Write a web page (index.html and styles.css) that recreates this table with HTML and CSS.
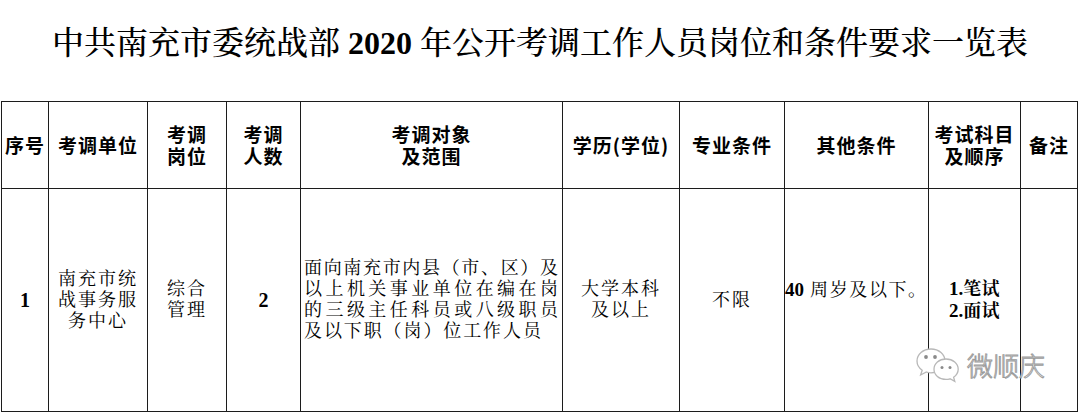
FILE: index.html
```html
<!DOCTYPE html>
<html lang="zh-CN">
<head>
<meta charset="utf-8">
<title>中共南充市委统战部2020年公开考调工作人员岗位和条件要求一览表</title>
<link rel="stylesheet" href="styles.css">
</head>
<body>
<h1 class="title">中共南充市委统战部 <span class="title-num">2020</span> 年公开考调工作人员岗位和条件要求一览表</h1>
<table class="grid">
  <colgroup>
    <col class="c-no"><col class="c-unit"><col class="c-post"><col class="c-count"><col class="c-scope">
    <col class="c-edu"><col class="c-major"><col class="c-other"><col class="c-exam"><col class="c-note">
  </colgroup>
  <thead>
    <tr class="head-row">
      <th>序号</th>
      <th>考调单位</th>
      <th>考调<br>岗位</th>
      <th>考调<br>人数</th>
      <th>考调对象<br>及范围</th>
      <th>学历(学位)</th>
      <th>专业条件</th>
      <th>其他条件</th>
      <th>考试科目<br>及顺序</th>
      <th>备注</th>
    </tr>
  </thead>
  <tbody>
    <tr class="body-row">
      <td class="num">1</td>
      <td>南充市统<br>战事务服<br>务中心</td>
      <td>综合<br>管理</td>
      <td class="num">2</td>
      <td class="scope">
        <span class="jl">面向南充市内县（市、区）及</span>
        <span class="jl">以上机关事业单位在编在岗</span>
        <span class="jl">的三级主任科员或八级职员</span>
        <span class="ll">及以下职（岗）位工作人员</span>
      </td>
      <td>大学本科<br>及以上</td>
      <td>不限</td>
      <td class="other"><b class="digits">40</b> 周岁及以下。</td>
      <td class="exam"><b class="digits">1.</b>笔试<br><b class="digits">2.</b>面试</td>
      <td></td>
    </tr>
  </tbody>
</table>
<svg class="wm-icon" width="46" height="40" viewBox="0 0 46 40" aria-hidden="true">
  <path d="M16 3 C8 3 2 8.5 2 15 C2 18.8 4 22 7.2 24.2 L5.6 29 L11.4 26 C12.9 26.5 14.4 26.8 16 26.8 C24 26.8 30 21.5 30 15 C30 8.5 24 3 16 3 Z" fill="#fff" stroke="#b8b8b8" stroke-width="1.3"/>
  <circle cx="11" cy="11" r="1.9" fill="#8a8a8a"/>
  <circle cx="20" cy="11" r="1.9" fill="#8a8a8a"/>
  <path d="M31 13 C24 13 19 17.6 19 23.2 C19 28.8 24 33.4 31 33.4 C32.4 33.4 33.7 33.2 35 32.8 L39.8 35.4 L38.6 31.2 C41.5 29.2 43.2 26.3 43.2 23.2 C43.2 17.6 38 13 31 13 Z" fill="#fff" stroke="#b8b8b8" stroke-width="1.3"/>
  <circle cx="27" cy="21.5" r="1.5" fill="#8a8a8a"/>
  <circle cx="35" cy="21.5" r="1.5" fill="#8a8a8a"/>
</svg>
<div class="wm-text">微顺庆</div>
</body>
</html>
```
FILE: styles.css
```css
html, body {
  margin: 0;
  padding: 0;
  background: #fff;
}
body {
  width: 1080px;
  height: 414px;
  overflow: hidden;
  position: relative;
  color: #000;
  font-family: "Liberation Serif", "Noto Serif CJK SC", "Noto Sans CJK SC", serif;
}
.title {
  margin: 0;
  height: 101px;
  line-height: 86px;
  text-align: center;
  font-size: 32px;
  font-weight: 500;
  white-space: nowrap;
}
.title-num {
  font-weight: 700;
}
.grid {
  margin-left: 1px;
  width: 1076px;
  border-collapse: collapse;
  table-layout: fixed;
}
.c-no { width: 47px; }
.c-unit { width: 99px; }
.c-post { width: 79px; }
.c-count { width: 74px; }
.c-scope { width: 262px; }
.c-edu { width: 117px; }
.c-major { width: 105px; }
.c-other { width: 144px; }
.c-exam { width: 92px; }
.c-note { width: 57px; }
.grid th,
.grid td {
  border: 1px solid #1c1c1c;
  padding: 0;
  text-align: center;
  vertical-align: middle;
}
.head-row {
  height: 87px;
}
.grid th {
  font-family: "Noto Sans CJK SC", sans-serif;
  font-weight: 700;
  font-size: 19px;
  line-height: 22px;
  letter-spacing: 1px;
  white-space: nowrap;
}
.body-row {
  height: 223px;
}
.grid td {
  font-size: 18px;
  line-height: 21px;
  letter-spacing: 2px;
}
.grid td.num {
  font-size: 20px;
  font-weight: 700;
  letter-spacing: 0;
}
.grid td.scope {
  text-align: left;
  padding-left: 3px;
  letter-spacing: 0;
}
.scope .jl {
  display: block;
  width: 254px;
  text-align: justify;
  text-align-last: justify;
}
.scope .ll {
  display: block;
  letter-spacing: 1.9px;
}
.grid td.other {
  text-align: left;
  letter-spacing: 1.6px;
  padding-bottom: 20px;
  white-space: nowrap;
}
.digits {
  font-family: "Liberation Serif", serif;
  font-weight: 700;
  font-size: 19px;
  letter-spacing: 0;
}
.grid td.exam {
  font-weight: 700;
  letter-spacing: 0.5px;
}
.wm-icon {
  position: absolute;
  left: 915px;
  top: 346px;
}
.wm-text {
  position: absolute;
  left: 967px;
  top: 348px;
  font-family: "Noto Sans CJK SC", sans-serif;
  font-weight: 300;
  font-size: 26px;
  line-height: 34px;
  color: #fff;
  -webkit-text-stroke: 0.9px #9a9a9a;
  letter-spacing: 0;
}
```
